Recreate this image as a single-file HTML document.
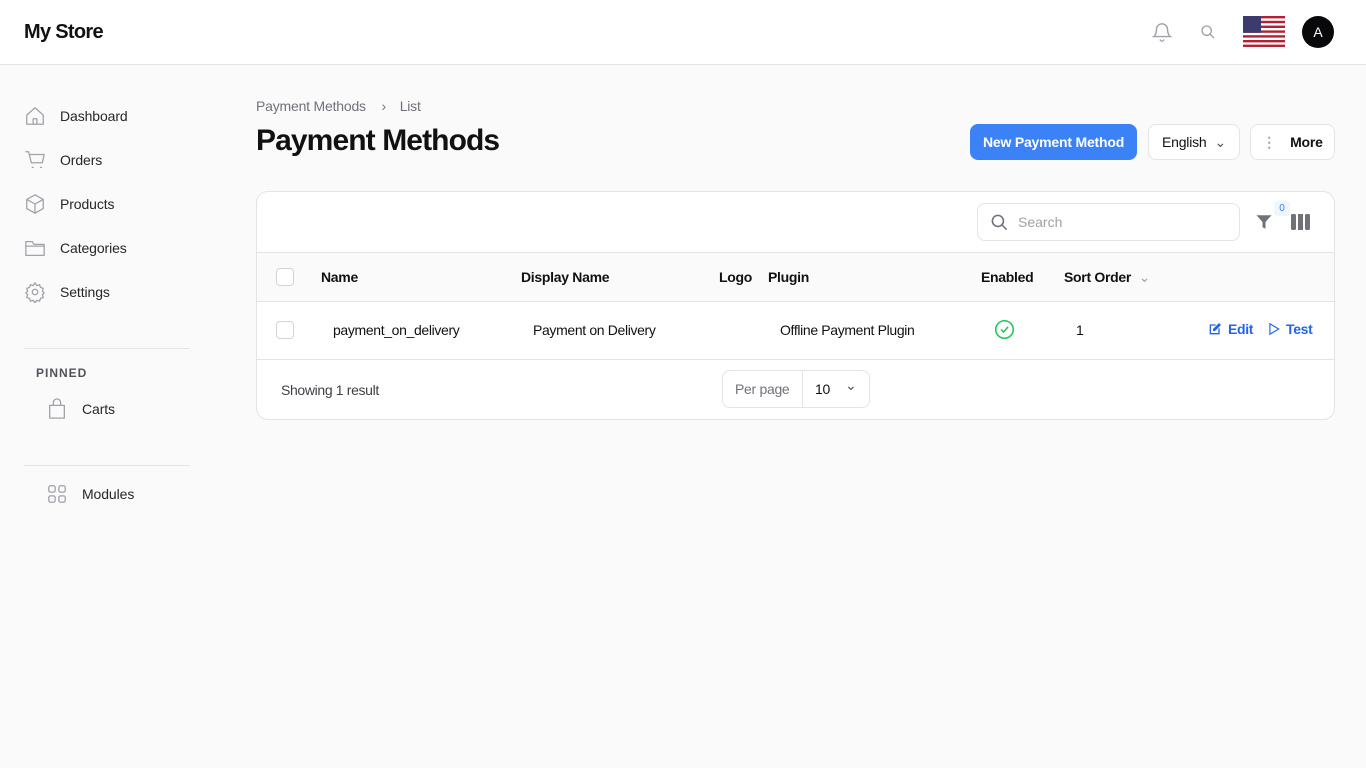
<!DOCTYPE html>
<html><head><meta charset="utf-8"><style>
*{box-sizing:border-box;margin:0;padding:0}
body{width:1366px;height:768px;background:#fafafa;font-family:"Liberation Sans",sans-serif;color:#111;position:relative;overflow:hidden}
.top{position:absolute;left:0;top:0;width:1366px;height:65px;background:#fff;border-bottom:1px solid #e4e4e7}
.abs{position:absolute}
.nav{position:absolute;left:24px;display:flex;align-items:center;font-size:14px;color:#27272a;letter-spacing:-0.1px}
.nav svg{width:22px;height:22px;margin-right:14px;fill:none;stroke:#a1a1aa;stroke-width:1.4;stroke-linecap:round;stroke-linejoin:round}
.hr{position:absolute;left:24px;width:166px;height:1px;background:#e4e4e7}
.btn{position:absolute;height:36px;border-radius:8px;font-size:14px;display:flex;align-items:center;justify-content:center;letter-spacing:-0.2px}
.card{position:absolute;left:256px;top:191px;width:1079px;height:229px;background:#fff;border:1px solid #e4e4e7;border-radius:12px;overflow:hidden}
.th{font-size:14px;font-weight:bold;position:absolute;letter-spacing:-0.3px}
.td{font-size:14px;position:absolute;letter-spacing:-0.35px}
.cb{position:absolute;width:18px;height:18px;border:1px solid #d4d4d8;border-radius:4px;background:#fff}
</style></head><body>
<div class="top">
<div class="abs" style="left:24px;top:21px;font-size:20px;font-weight:bold;letter-spacing:-0.7px">My Store</div>
<svg class="abs" style="left:1151px;top:21px" width="22" height="22" viewBox="0 0 24 24" fill="none" stroke="#a1a1aa" stroke-width="1.5"><path d="M6 9a6 6 0 0112 0c0 6 3 8 3 8H3s3-2 3-8M10 20a2 2 0 004 0"/></svg>
<svg class="abs" style="left:1200px;top:24px" width="16" height="16" viewBox="0 0 24 24" fill="none" stroke="#a1a1aa" stroke-width="2"><circle cx="10" cy="10" r="7"/><path d="M15 15l6 6"/></svg>
<svg class="abs" style="left:1243px;top:16px" width="42" height="31" viewBox="0 0 42 31"><rect width="42" height="31" fill="#fff"/><g fill="#b22234"><rect y="0" width="42" height="2.4"/><rect y="4.8" width="42" height="2.4"/><rect y="9.6" width="42" height="2.4"/><rect y="14.4" width="42" height="2.4"/><rect y="19.2" width="42" height="2.4"/><rect y="24" width="42" height="2.4"/><rect y="28.6" width="42" height="2.4"/></g><rect width="18" height="16.8" fill="#3c3b6e"/></svg>
<div class="abs" style="left:1302px;top:16px;width:32px;height:32px;border-radius:50%;background:#09090b;color:#fff;font-size:14px;display:flex;align-items:center;justify-content:center">A</div>
</div>

<div class="nav" style="top:105px"><svg viewBox="0 0 24 24"><path d="M3 11l9-8 9 8v10H3zM10 21v-6h4v6"/></svg>Dashboard</div>
<div class="nav" style="top:149px"><svg viewBox="0 0 24 24"><path d="M2 3h3l3 12h12l2-9H6M9 20h1M18 20h1"/></svg>Orders</div>
<div class="nav" style="top:193px"><svg viewBox="0 0 24 24"><path d="M12 2l9 5v10l-9 5-9-5V7zM3 7l9 5 9-5M12 12v10"/></svg>Products</div>
<div class="nav" style="top:237px"><svg viewBox="0 0 24 24"><path d="M2 5h7l2 3h11v12H2zM2 10h20"/></svg>Categories</div>
<div class="nav" style="top:281px"><svg viewBox="0 0 24 24"><circle cx="12" cy="12" r="3"/><path d="M12 2l2 3 3-1 1 3 3 1-1 3 2 2-2 2 1 3-3 1-1 3-3-1-2 3-2-3-3 1-1-3-3-1 1-3-2-2 2-2-1-3 3-1 1-3 3 1z"/></svg>Settings</div>
<div class="hr" style="top:348px"></div>
<div class="abs" style="left:36px;top:366px;font-size:12px;font-weight:bold;color:#52525b;letter-spacing:1px">PINNED</div>
<div class="nav" style="top:398px;left:46px"><svg viewBox="0 0 24 24"><path d="M4 8h16v14H4zM8 8V5a4 4 0 018 0v3"/></svg>Carts</div>
<div class="hr" style="top:465px"></div>
<div class="nav" style="top:483px;left:46px"><svg viewBox="0 0 24 24"><rect x="3" y="3" width="7" height="7" rx="2"/><rect x="14" y="3" width="7" height="7" rx="2"/><rect x="3" y="14" width="7" height="7" rx="2"/><rect x="14" y="14" width="7" height="7" rx="2"/></svg>Modules</div>

<div class="abs" style="left:256px;top:98px;font-size:14px;color:#71717a;letter-spacing:-0.2px">Payment Methods <span style="margin:0 10px 0 12px">›</span> List</div>
<div class="abs" style="left:256px;top:124px;font-size:30px;font-weight:bold;letter-spacing:-0.9px">Payment Methods</div>
<div class="btn" style="left:970px;top:124px;width:167px;background:#3b82f6;color:#fff;font-weight:bold">New Payment Method</div>
<div class="btn" style="left:1148px;top:124px;width:92px;background:#fff;border:1px solid #e4e4e7">English <span style="margin-left:8px;color:#52525b">⌄</span></div>
<div class="btn" style="left:1250px;top:124px;width:85px;background:#fff;border:1px solid #e4e4e7;font-weight:bold"><span style="color:#a1a1aa;margin-right:14px">⋮</span>More</div>

<div class="card">
<div class="abs" style="left:720px;top:11px;width:263px;height:38px;border:1px solid #e4e4e7;border-radius:8px;font-size:14px;color:#a1a1aa;padding:10px 0 0 40px">Search
<svg class="abs" style="left:12px;top:9px" width="19" height="19" viewBox="0 0 24 24" fill="none" stroke="#71717a" stroke-width="2"><circle cx="10" cy="10" r="7"/><path d="M15 15l6 6"/></svg></div>
<svg class="abs" style="left:998px;top:21px" width="18" height="18" viewBox="0 0 24 24"><path d="M2 3h20l-8 9v9l-4-2v-7z" fill="#71717a"/></svg>
<div class="abs" style="left:1017px;top:9px;width:16px;height:15px;border-radius:4px;background:#eff6ff;color:#3b82f6;font-size:10px;text-align:center;line-height:15px">0</div>
<svg class="abs" style="left:1034px;top:22px" width="19" height="16" viewBox="0 0 19 16" fill="#71717a"><rect width="5" height="16" rx="1.5"/><rect x="7" width="5" height="16"/><rect x="14" width="5" height="16" rx="1.5"/></svg>
<div class="abs" style="left:0;top:60px;width:1079px;height:50px;background:#fafafa;border-top:1px solid #e4e4e7;border-bottom:1px solid #e4e4e7"></div>
<div class="cb" style="left:19px;top:76px"></div>
<div class="th" style="left:64px;top:77px">Name</div>
<div class="th" style="left:264px;top:77px">Display Name</div>
<div class="th" style="left:462px;top:77px">Logo</div>
<div class="th" style="left:511px;top:77px">Plugin</div>
<div class="th" style="left:724px;top:77px">Enabled</div>
<div class="th" style="left:807px;top:77px">Sort Order <span style="color:#a1a1aa;font-weight:normal;margin-left:4px">⌄</span></div>
<div class="cb" style="left:19px;top:129px"></div>
<div class="td" style="left:76px;top:130px">payment_on_delivery</div>
<div class="td" style="left:276px;top:130px">Payment on Delivery</div>
<div class="td" style="left:523px;top:130px">Offline Payment Plugin</div>
<svg class="abs" style="left:737px;top:127px" width="21" height="21" viewBox="0 0 24 24" fill="none" stroke="#22c55e" stroke-width="1.8"><circle cx="12" cy="12" r="10"/><path d="M8 12l3 3 5-6"/></svg>
<div class="td" style="left:819px;top:130px">1</div>
<div class="td" style="left:950px;top:129px;color:#2563eb;font-weight:bold;display:flex;align-items:center"><svg width="16" height="16" viewBox="0 0 24 24" fill="#2563eb" style="margin-right:5px"><path d="M4 5h9v2H6v11h11v-7h2v9H4z"/><path d="M18 3l3 3-9 9H9v-3z"/></svg>Edit<svg width="14" height="14" viewBox="0 0 24 24" fill="none" stroke="#2563eb" stroke-width="2" style="margin:0 5px 0 14px"><path d="M5 3l15 9-15 9z"/></svg>Test</div>
<div class="abs" style="left:0;top:167px;width:1079px;height:1px;background:#e4e4e7"></div>
<div class="td" style="left:24px;top:190px;color:#3f3f46">Showing 1 result</div>
<div class="abs" style="left:465px;top:178px;width:148px;height:38px;border:1px solid #e4e4e7;border-radius:8px;font-size:14px;letter-spacing:-0.3px">
<div class="abs" style="left:0;top:0;width:80px;height:36px;border-right:1px solid #e4e4e7;color:#71717a;padding:10px 0 0 12px">Per page</div>
<div class="abs" style="left:92px;top:10px">10</div><div class="abs" style="left:122px;top:6px;color:#52525b">⌄</div></div>
</div>
</body></html>
